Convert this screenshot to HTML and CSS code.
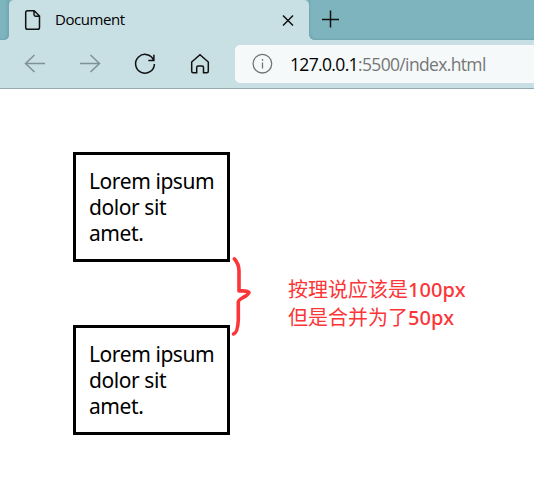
FILE: index.html
```html
<!DOCTYPE html>
<html lang="zh">
<head>
<meta charset="utf-8">
<title>Document</title>
<link rel="stylesheet" href="styles.css">
</head>
<body>
<header class="browser">
  <div class="tabstrip">
    <div class="strip-start"></div>
    <div class="tab">
      <svg class="file-icon" width="16" height="20" viewBox="0 0 16 20"><path d="M2.500.7h6.700l5.300 5.300v11.500q0 1.800-1.800 1.800H2.500Q.7 19.300.7 17.500V2.500Q.7.7 2.500.7ZM9 .9v3.600q0 1.700 1.700 1.700h3.600"/></svg>
      <span class="tab-title">Document</span>
      <svg class="close-icon" width="12" height="12" viewBox="0 0 12 12"><path d="M1 1.500l10 10M11 1.500L1 11.500"/></svg>
    </div>
    <div class="strip-end">
      <svg width="18" height="18" viewBox="0 0 18 18"><path d="M8.500 .5v17M0 9.500h17"/></svg>
    </div>
  </div>
  <div class="toolbar">
    <svg class="muted" width="22" height="20" viewBox="0 0 22 20"><path d="M21 9.500H1.500M10.500 1L1.500 9.500l9 8.500"/></svg>
    <svg class="muted" width="22" height="20" viewBox="0 0 22 20"><path d="M1 9.500h19.500M11.500 1l9 8.500-9 8.500"/></svg>
    <svg width="22" height="22" viewBox="0 0 22 22"><path d="M19.800 7.500A9.400 9.400 0 1 0 20.400 11M19.900 1.800v5.800h-5.600"/></svg>
    <svg width="22" height="22" viewBox="0 0 22 22"><path d="M2.700 9L11 1.800 19.300 9v9.300q0 1.500-1.500 1.500h-3.300v-5.300q0-1.500-1.500-1.500H9.200q-1.500 0-1.500 1.500v5.300H4.200q-1.500 0-1.500-1.500Z"/></svg>
    <div class="address">
      <svg class="info" width="20" height="20" viewBox="0 0 20 20"><circle cx="10.400" cy="9.700" r="9.300"/><path d="M10.500 8.500v6M10.500 5v1.700"/></svg>
      <span class="url"><span class="host">127.0.0.1</span>:5500/index.html</span>
    </div>
  </div>
</header>
<main class="page">
  <div class="boxes">
    <div class="box">Lorem ipsum<br>dolor sit<br>amet.</div>
    <div class="box">Lorem ipsum<br>dolor sit<br>amet.</div>
  </div>
  <svg class="brace" width="22" height="82" viewBox="231 256 22 82"><path d="M234.300 258.800Q239 264 239 271V291Q247 290.500 249 292.500Q247.500 295.500 243 297.500Q238.500 300 238.300 302V320Q237.700 333 233.500 334"/></svg>
  <p class="note"><span class="line">按理说应该是<span class="latin">100px</span></span><span class="line">但是合并为了<span class="latin">50px</span></span></p>
</main>
</body>
</html>
```
FILE: styles.css
```css
* { box-sizing: border-box; }
body {
  margin: 0;
  height: 496px;
  overflow: hidden;
  background: #fff;
  color: #000;
  font-family: "Noto Sans", "Noto Sans CJK SC", sans-serif;
}
svg { display: block; flex: none; fill: none; stroke: #111; stroke-width: 1.5; overflow: visible; }
.browser { height: 89px; background: #c8dfe3; border-bottom: 1px solid #96a9b3; }
.tabstrip { display: flex; height: 40px; background: linear-gradient(#7eb4be 50%, #c8dfe3 50%); }
.strip-start { width: 9px; background: #7eb4be; border-bottom-right-radius: 5px; box-shadow: inset -2px -1px 2px #72a9b2; }
.tab { display: flex; align-items: center; width: 300px; padding: 0 15px 0 16px; border-radius: 5px 5px 0 0; background: #c8dfe3; }
.tab-title { margin-left: 14px; font-family: "Open Sans", sans-serif; font-size: 15px; line-height: 20px; letter-spacing: -0.42px; transform: translateY(-1px); }
.close-icon { margin-left: auto; }
.strip-end { flex: 1; padding: 10px 0 0 13px; background: #7eb4be; border-bottom-left-radius: 6px; box-shadow: inset 1px -1px 2px #6da6ae; }
.toolbar { display: flex; align-items: center; gap: 33px; height: 48px; padding-left: 24px; }
.toolbar .muted { stroke: #7f9195; }
.address { display: flex; align-items: center; flex: 1; height: 38px; margin-left: -9px; padding-left: 17px; border-radius: 5px 0 0 5px; background: #f5f9fa; }
.address .info { stroke: #707476; stroke-width: 1.3; }
.url { margin-left: 18px; font-family: "Open Sans", sans-serif; font-size: 17.5px; line-height: 24px; letter-spacing: -0.65px; color: #767676; }
.host { color: #000; }
.page { display: flex; padding: 63px 0 0 73px; }
.box { width: 157px; height: 110px; margin-bottom: 63px; padding: 13px; border: 3px solid #000; font-size: 21px; line-height: 26px; letter-spacing: -0.42px; white-space: nowrap; }
.brace { margin: 104px 0 0 1px; stroke: #fb3538; stroke-width: 3.6; stroke-linecap: round; stroke-linejoin: round; }
.note { margin: 124px 0 0 35px; color: #fb3538; font-size: 20px; line-height: 28px; }
.line { display: block; white-space: nowrap; }
.latin { font-weight: 500; letter-spacing: 0.1px; }
```
